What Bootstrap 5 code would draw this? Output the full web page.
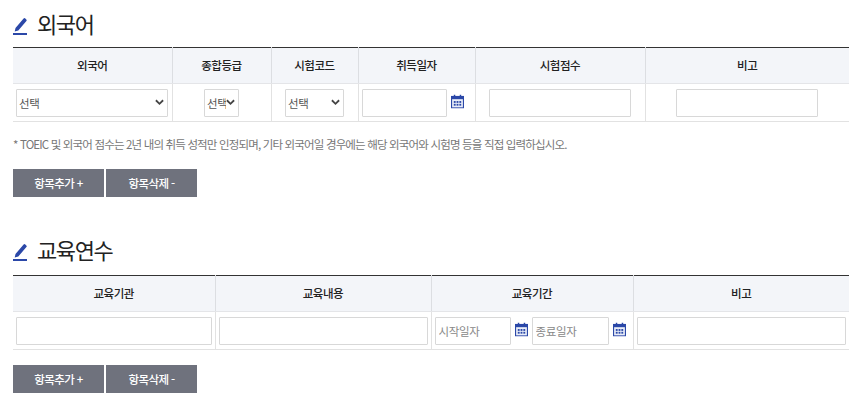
<!DOCTYPE html>
<html lang="ko">
<head>
<meta charset="utf-8">
<title>외국어 / 교육연수</title>
<link href="https://cdn.jsdelivr.net/npm/bootstrap@5.3.0/dist/css/bootstrap.min.css" rel="stylesheet">
<style>
html,body{height:406px;overflow:hidden}
body{font-family:"Noto Sans CJK KR","Noto Sans",sans-serif;background:#fff;color:#222;padding:0 7px 0 13px}
.sec-title{height:47px;padding-top:7px;font-size:22px;line-height:32px;letter-spacing:-1.4px;font-weight:400;color:#222;margin:0}
.sec-title svg{width:15px;height:18px;margin-right:9px;vertical-align:-2px}
.edu-title{height:63px;padding-top:21px;margin-top:15px;padding-bottom:2px}
.form-tbl{width:836px;table-layout:fixed;border-collapse:collapse;margin:0;border-top:1px solid #333}
.form-tbl th{height:36px;background:#f3f5f9;font-size:11.5px;letter-spacing:-.45px;font-weight:500;text-align:center;vertical-align:middle;color:#222;border-left:1px solid #dcdee2;border-bottom:1px solid #e4e5e8;padding:0}
.form-tbl td{height:38px;padding:0;text-align:center;vertical-align:middle;border-left:1px solid #e2e2e2;border-bottom:1px solid #e2e2e2}
.form-tbl th:first-child,.form-tbl td:first-child{border-left:0}
.fld{height:28px;border:1px solid #d8d8d8;border-radius:1px;background-color:#fff;font-size:11.5px;letter-spacing:-.3px;color:#555;padding:0 3px;margin:0;min-height:0;box-shadow:none;display:block}
select.fld{background-image:url("data:image/svg+xml,%3csvg xmlns='http://www.w3.org/2000/svg' viewBox='0 0 10 7'%3e%3cpath fill='none' stroke='%23444' stroke-width='2' d='M1 1l4 4 4-4'/%3e%3c/svg%3e");background-position:right 3px center;background-size:9px 7px;padding:0 12px 0 2px;line-height:26px}
.fld::placeholder{color:#888;opacity:1}
.cal{width:13px;height:15px;flex:none;margin:0 4px 3px}
.date-wrap{padding-left:3px}
.note{font-size:11.5px;letter-spacing:-.84px;color:#777;margin:0;height:47px;padding-top:13px;line-height:18px}
.act-btn{width:91px;height:28px;background:#6f727d;border:0;border-radius:0;color:#fff;font-size:11.5px;letter-spacing:-.6px;font-weight:500;padding:0;line-height:28px}
.act-btn:hover{background:#6f727d;color:#fff}
.gap-btn{gap:2px}
.w-a{width:159px}.w-b{width:99px}.w-c{width:87px}.w-d{width:117px}.w-e{width:170px}.w-f{width:204px}
.w-g{width:202px}.w-h{width:216px}.w-i{width:202px}.w-j{width:216px}
.f-152{width:152px;margin-left:3px}.f-35{width:35px}.f-59{width:59px}.f-85{width:85px}.f-142{width:142px}
.f-196{width:196px;margin-left:3px}.f-209{width:209px}.f-76{width:76px}.f-77{width:77px}
.mt-btn{margin-top:15px}
</style>
</head>
<body>
<h2 class="sec-title"><svg viewBox="0 0 15 18"><path fill="#2b48a8" d="M2.500 11 10.600 1.600a1.200 1.200 0 0 1 1.700-.1l1 .9a1.200 1.200 0 0 1 .1 1.700L5.300 13.500l-3.600 1z"/><rect y="16" width="14" height="2" fill="#2b48a8"/></svg>외국어</h2>
<table class="form-tbl">
<colgroup><col class="w-a"><col class="w-b"><col class="w-c"><col class="w-d"><col class="w-e"><col class="w-f"></colgroup>
<thead><tr><th>외국어</th><th>종합등급</th><th>시험코드</th><th>취득일자</th><th>시험점수</th><th>비고</th></tr></thead>
<tbody><tr>
<td><select class="form-select fld f-152"><option>선택</option></select></td>
<td><select class="form-select fld f-35 mx-auto"><option>선택</option></select></td>
<td><select class="form-select fld f-59 mx-auto"><option>선택</option></select></td>
<td><div class="d-flex align-items-center date-wrap"><input class="form-control fld f-85"><svg class="cal" viewBox="0 0 14 15"><use href="#calico"/></svg></div></td>
<td><input class="form-control fld f-142 mx-auto"></td>
<td><input class="form-control fld f-142 mx-auto"></td>
</tr></tbody>
</table>
<p class="note">* TOEIC 및 외국어 점수는 2년 내의 취득 성적만 인정되며, 기타 외국어일 경우에는 해당 외국어와 시험명 등을 직접 입력하십시오.</p>
<div class="d-flex gap-btn">
<button class="btn act-btn">항목추가 +</button><button class="btn act-btn">항목삭제 -</button>
</div>

<h2 class="sec-title edu-title"><svg viewBox="0 0 15 18"><path fill="#2b48a8" d="M2.500 11 10.600 1.600a1.200 1.200 0 0 1 1.700-.1l1 .9a1.200 1.200 0 0 1 .1 1.700L5.300 13.500l-3.600 1z"/><rect y="16" width="14" height="2" fill="#2b48a8"/></svg>교육연수</h2>
<table class="form-tbl">
<colgroup><col class="w-g"><col class="w-h"><col class="w-i"><col class="w-j"></colgroup>
<thead><tr><th>교육기관</th><th>교육내용</th><th>교육기간</th><th>비고</th></tr></thead>
<tbody><tr>
<td><input class="form-control fld f-196"></td>
<td><input class="form-control fld f-209 mx-auto"></td>
<td><div class="d-flex align-items-center date-wrap"><input class="form-control fld f-76" placeholder="시작일자"><svg class="cal" viewBox="0 0 14 15"><use href="#calico"/></svg><input class="form-control fld f-77" placeholder="종료일자"><svg class="cal" viewBox="0 0 14 15"><use href="#calico"/></svg></div></td>
<td><input class="form-control fld f-209 mx-auto"></td>
</tr></tbody>
</table>
<div class="d-flex gap-btn mt-btn">
<button class="btn act-btn">항목추가 +</button><button class="btn act-btn">항목삭제 -</button>
</div>

<svg width="0" height="0" class="position-absolute"><defs>
<symbol id="calico" viewBox="0 0 14 15">
<rect x=".6" y="2.100" width="12.800" height="12.300" fill="#e9edf8" stroke="#2b48a8" stroke-width="1.200"/>
<rect x="0" y="2" width="14" height="3" fill="#2b48a8"/>
<rect x="3" y="0" width="1.600" height="3.500" fill="#2b48a8"/><rect x="9.400" y="0" width="1.600" height="3.500" fill="#2b48a8"/>
<g fill="#2b48a8"><rect x="3" y="7" width="2" height="2"/><rect x="6" y="7" width="2" height="2"/><rect x="9" y="7" width="2" height="2"/><rect x="3" y="10" width="2" height="2"/><rect x="6" y="10" width="2" height="2"/><rect x="9" y="10" width="2" height="2"/></g>
</symbol></defs></svg>
<script src="https://cdn.jsdelivr.net/npm/bootstrap@5.3.0/dist/js/bootstrap.bundle.min.js"></script>
</body>
</html>
